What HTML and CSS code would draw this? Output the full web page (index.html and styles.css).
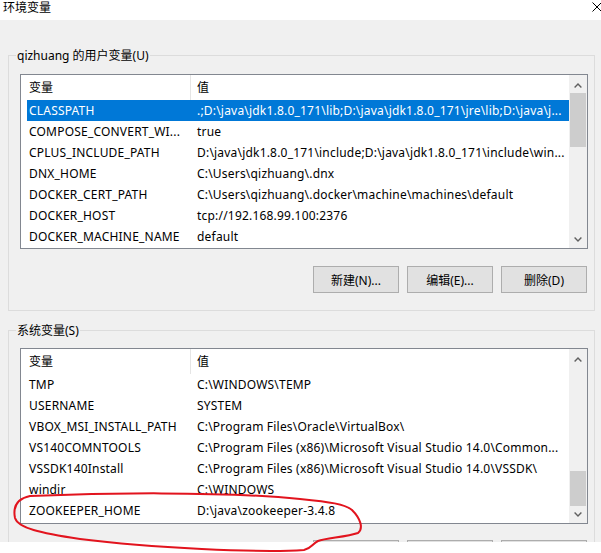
FILE: index.html
```html
<!DOCTYPE html>
<html lang="zh-CN">
<head>
<meta charset="utf-8">
<title>环境变量</title>
<link rel="stylesheet" href="styles.css">
</head>
<body>
<div class="window">
  <div class="titlebar">
    <span class="title">环境变量</span>
    <svg class="close" width="10" height="10" viewBox="0 0 10 10"><path d="M0.5 0.5 L9.5 9.5 M9.5 0.5 L0.5 9.5" stroke="#000" stroke-width="1" fill="none"/></svg>
  </div>
  <div class="dialog">
    <div class="group g1">
      <div class="group-label">qizhuang 的用户变量(U)</div>
      <div class="list l1">
        <div class="list-main">
          <div class="row head"><div class="c1">变量</div><div class="c2">值</div></div>
          <div class="row sel"><div class="c1">CLASSPATH</div><div class="c2">.;D:\java\jdk1.8.0_171\lib;D:\java\jdk1.8.0_171\jre\lib;D:\java\j...</div></div>
          <div class="row"><div class="c1">COMPOSE_CONVERT_WI...</div><div class="c2">true</div></div>
          <div class="row"><div class="c1">CPLUS_INCLUDE_PATH</div><div class="c2">D:\java\jdk1.8.0_171\include;D:\java\jdk1.8.0_171\include\win...</div></div>
          <div class="row"><div class="c1">DNX_HOME</div><div class="c2">C:\Users\qizhuang\.dnx</div></div>
          <div class="row"><div class="c1">DOCKER_CERT_PATH</div><div class="c2">C:\Users\qizhuang\.docker\machine\machines\default</div></div>
          <div class="row"><div class="c1">DOCKER_HOST</div><div class="c2">tcp://192.168.99.100:2376</div></div>
          <div class="row"><div class="c1">DOCKER_MACHINE_NAME</div><div class="c2">default</div></div>
        </div>
        <div class="scrollbar">
          <div class="sb-btn up"><svg width="8" height="5" viewBox="0 0 8 5"><polyline points="0.6,4.4 4,1 7.4,4.4" fill="none" stroke="#606060" stroke-width="1.4"/></svg></div>
          <div class="thumb t1"></div>
          <div class="sb-track"></div>
          <div class="sb-btn down"><svg width="8" height="5" viewBox="0 0 8 5"><polyline points="0.6,0.6 4,4 7.4,0.6" fill="none" stroke="#606060" stroke-width="1.4"/></svg></div>
        </div>
      </div>
      <div class="buttons">
        <button class="btn">新建(N)...</button>
        <button class="btn">编辑(E)...</button>
        <button class="btn">删除(D)</button>
      </div>
    </div>

    <div class="group g2">
      <div class="group-label">系统变量(S)</div>
      <div class="list l2">
        <div class="list-main">
          <div class="row head"><div class="c1">变量</div><div class="c2">值</div></div>
          <div class="row"><div class="c1">TMP</div><div class="c2">C:\WINDOWS\TEMP</div></div>
          <div class="row"><div class="c1">USERNAME</div><div class="c2">SYSTEM</div></div>
          <div class="row"><div class="c1">VBOX_MSI_INSTALL_PATH</div><div class="c2">C:\Program Files\Oracle\VirtualBox\</div></div>
          <div class="row"><div class="c1">VS140COMNTOOLS</div><div class="c2">C:\Program Files (x86)\Microsoft Visual Studio 14.0\Common...</div></div>
          <div class="row"><div class="c1">VSSDK140Install</div><div class="c2">C:\Program Files (x86)\Microsoft Visual Studio 14.0\VSSDK\</div></div>
          <div class="row"><div class="c1">windir</div><div class="c2">C:\WINDOWS</div></div>
          <div class="row"><div class="c1">ZOOKEEPER_HOME</div><div class="c2">D:\java\zookeeper-3.4.8</div></div>
        </div>
        <div class="scrollbar">
          <div class="sb-btn up"><svg width="8" height="5" viewBox="0 0 8 5"><polyline points="0.6,4.4 4,1 7.4,4.4" fill="none" stroke="#606060" stroke-width="1.4"/></svg></div>
          <div class="sb-track"></div>
          <div class="thumb t2"></div>
          <div class="sb-btn down"><svg width="8" height="5" viewBox="0 0 8 5"><polyline points="0.6,0.6 4,4 7.4,0.6" fill="none" stroke="#606060" stroke-width="1.4"/></svg></div>
        </div>
      </div>
      <div class="buttons b2">
        <button class="btn" aria-label="新建(W)..."></button>
        <button class="btn" aria-label="编辑(I)..."></button>
        <button class="btn" aria-label="删除(L)"></button>
      </div>
    </div>
  </div>
  <svg class="annot" width="601" height="553" viewBox="0 0 601 553">
    <path d="M30 496 C100 493 220 491 300 499 C330 502 345 504 352 510 C360 518 364 528 358 533 C346 537 326 538 318 541 C312 544 312 548 304 550 C260 553 150 548 80 539 C40 533 18 528 15 518 C13 508 16 499 30 496" fill="none" stroke="#e2141e" stroke-width="2" stroke-linecap="round" stroke-linejoin="round"/>
  </svg>
</div>
</body>
</html>
```

FILE: styles.css
```css
* { box-sizing: border-box; }

html, body {
  margin: 0;
  padding: 0;
  background: #ffffff;
}

body {
  width: 601px;
  height: 553px;
  overflow: hidden;
  font-family: "Noto Sans", "Noto Sans CJK SC", sans-serif;
  font-size: 12px;
  color: #000;
}

.window {
  position: relative;
  width: 601px;
  height: 553px;
  overflow: hidden;
}

.titlebar {
  height: 20px;
  background: #ffffff;
  display: flex;
  justify-content: space-between;
  align-items: flex-start;
}

.title {
  display: block;
  padding-left: 3px;
  margin-top: 0;
  line-height: 14px;
  font-size: 12px;
  font-family: "Noto Sans CJK SC", sans-serif;
}

.close {
  display: block;
  margin-top: 2px;
  margin-right: -1px;
}

.dialog {
  height: 522px;
  background: #f0f0f0;
  overflow: hidden;
  padding: 35px 6px 0 8px;
}

.group {
  border: 1px solid #dcdcdc;
  padding: 0 6px 17px 11px;
}

.g2 {
  margin-top: 19px;
  padding-bottom: 0;
}

.group-label {
  width: fit-content;
  height: 16px;
  line-height: 16px;
  margin-top: -8px;
  margin-left: -4px;
  padding: 0 1px;
  background: #f0f0f0;
  white-space: nowrap;
}

.list {
  border: 1px solid #828790;
  background: #ffffff;
  display: flex;
  margin-top: 10px;
  height: 175px;
}

.l2 {
  margin-top: 9px;
  height: 176px;
}

.list-main {
  flex: 1;
  min-width: 0;
  padding-left: 6px;
  overflow: hidden;
  letter-spacing: 0.2px;
}

.row {
  display: flex;
  height: 21px;
  line-height: 21px;
  white-space: nowrap;
}

.row.head {
  height: 25px;
  line-height: 25px;
  letter-spacing: 0;
}

.c1 {
  width: 163px;
  flex: none;
  padding-left: 2px;
  overflow: hidden;
}

.c2 {
  flex: 1;
  min-width: 0;
  padding-left: 7px;
  overflow: hidden;
}

.head .c2 {
  border-left: 1px solid #e5e5e5;
  padding-left: 6px;
}

.row.sel {
  background: #0078d7;
  color: #ffffff;
}

.scrollbar {
  width: 18px;
  flex: none;
  background: #f0f0f0;
  display: flex;
  flex-direction: column;
}

.sb-btn {
  display: flex;
  align-items: center;
  justify-content: center;
  flex: none;
}

.sb-btn svg { display: block; }

.sb-btn.up {
  height: 18px;
  padding-top: 2px;
}

.sb-btn.down {
  height: 17px;
}

.sb-track {
  flex: 1;
}

.thumb {
  background: #cdcdcd;
  margin: 0 1px;
  flex: none;
}

.t1 { height: 54px; }
.t2 { height: 35px; }

.buttons {
  display: flex;
  justify-content: flex-end;
  gap: 8px;
  padding-right: 1px;
  margin-top: 17px;
}

.b2 {
  margin-top: 16px;
}

.btn {
  width: 86px;
  height: 27px;
  padding: 0;
  margin: 0;
  background: #e1e1e1;
  border: 1px solid #adadad;
  font-family: "Noto Sans", "Noto Sans CJK SC", sans-serif;
  font-size: 12px;
  color: #000;
}

.annot {
  position: absolute;
  left: 0;
  top: 0;
  pointer-events: none;
}
```
